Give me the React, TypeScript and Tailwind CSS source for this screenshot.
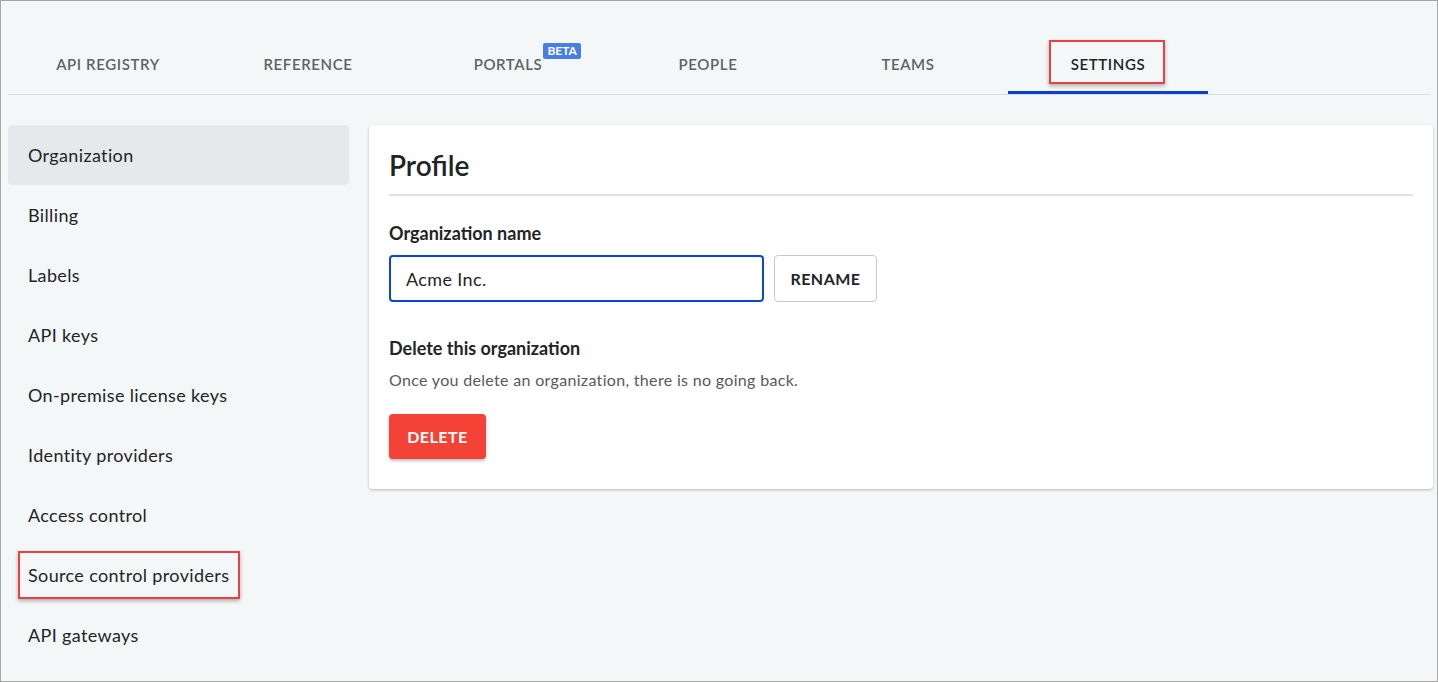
import React from 'react';

const tabs = ['API REGISTRY', 'REFERENCE', 'PORTALS', 'PEOPLE', 'TEAMS', 'SETTINGS'];

const menu = [
  'Organization',
  'Billing',
  'Labels',
  'API keys',
  'On-premise license keys',
  'Identity providers',
  'Access control',
  'Source control providers',
  'API gateways',
];

export default function App() {
  return (
    <div
      className="w-[1438px] h-[682px] overflow-hidden bg-[#f4f7f8] border border-[#a5a5a5] text-[#1f2426]"
      style={{ fontFamily: 'Lato, "Open Sans", sans-serif' }}
    >
      {/* Top tab bar */}
      <div className="ml-[7px] mr-[6px] mt-[39px] flex border-b border-[#d6dfe8]">
        {tabs.map((t) => {
          const active = t === 'SETTINGS';
          return (
            <div
              key={t}
              className={`relative w-[200px] h-[54px] flex justify-center pt-[15px] text-[15px] leading-[18px] font-semibold tracking-[0.04em] ${
                active ? 'text-[#1e2326] border-b-[3px] border-[#0a3fcf] mb-[-1px]' : 'text-[#5d6266]'
              }`}
            >
              <span className="relative h-[18px]">
                {t}
                {t === 'PORTALS' && (
                  <span className="absolute left-[100%] top-[-12px] ml-[1px] px-[4px] rounded-[2px] bg-[#4a7ee6] text-white text-[12px] font-bold leading-[16px] tracking-normal">
                    BETA
                  </span>
                )}
              </span>
              {active && (
                <span className="absolute left-[41px] top-0 w-[116px] h-[44px] border-2 border-[#ec3f43] shadow-[0_2px_4px_rgba(0,0,0,0.3)]" />
              )}
            </div>
          );
        })}
      </div>

      <div className="flex gap-5 pl-[7px] pr-[4px] pt-[30px]">
        {/* Side menu */}
        <nav className="w-[341px] shrink-0 flex flex-col">
          {menu.map((m, i) => (
            <div
              key={m}
              className={`relative h-[60px] flex items-center px-5 text-[18px] tracking-[0.02em] rounded-[4px] ${
                i === 0 ? 'bg-[#e6e9eb]' : ''
              }`}
            >
              {m}
              {m === 'Source control providers' && (
                <span className="absolute left-[10px] top-[6px] w-[222px] h-[48px] border-2 border-[#ec3f43] shadow-[0_2px_4px_rgba(0,0,0,0.3)]" />
              )}
            </div>
          ))}
        </nav>

        {/* Profile card */}
        <div className="flex-1 h-[364px] bg-white rounded-[4px] shadow-[0_1px_3px_rgba(0,0,0,0.25)] px-5 pt-[20px]">
          <h1 className="text-[28px] font-semibold leading-[40px] pb-[9px] border-b-2 border-[#e0e0e0]">Profile</h1>

          <div className="mt-[25px] text-[18px] font-bold leading-[24px]">Organization name</div>
          <div className="mt-[10px] flex gap-[10px]">
            <input
              readOnly
              value="Acme Inc."
              className="w-[375px] h-[47px] px-[15px] text-[18px] tracking-[0.02em] rounded-[4px] border-2 border-[#0a47d2] outline-none text-[#1f2426]"
              style={{ fontFamily: 'inherit' }}
            />
            <button className="w-[103px] h-[47px] rounded-[4px] border border-[#c9c9c9] bg-white text-[16px] font-bold tracking-[0.03em]">
              RENAME
            </button>
          </div>

          <div className="mt-[34px] text-[18px] font-bold leading-[24px]">Delete this organization</div>
          <p className="mt-[10px] text-[16px] tracking-[0.02em] text-[#555a5e] leading-[20px]">
            Once you delete an organization, there is no going back.
          </p>
          <button className="mt-[24px] w-[97px] h-[45px] rounded-[4px] bg-[#f44336] text-white text-[16px] font-bold tracking-[0.03em] shadow-[0_2px_3px_rgba(0,0,0,0.25)]">
            DELETE
          </button>
        </div>
      </div>
    </div>
  );
}
